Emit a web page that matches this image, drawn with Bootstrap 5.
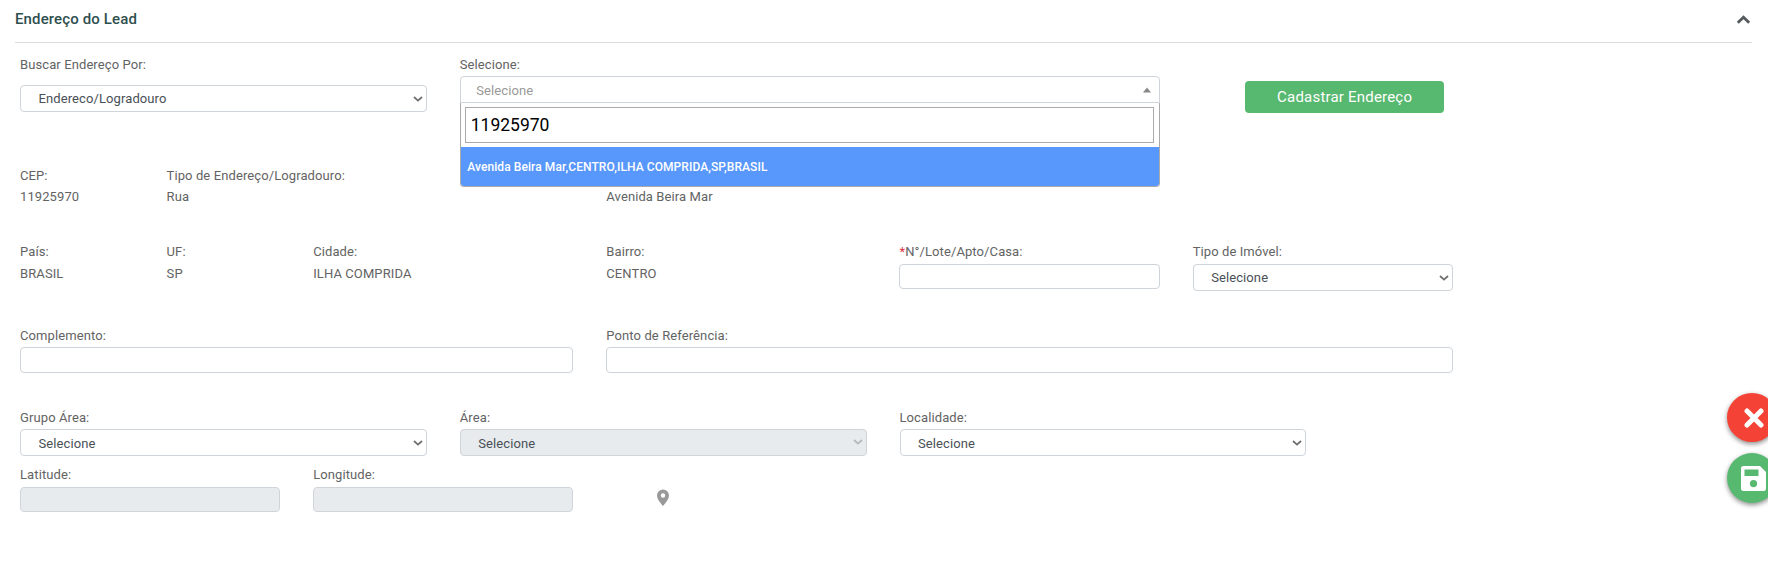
<!DOCTYPE html>
<html lang="pt-BR">
<head>
<meta charset="utf-8">
<meta name="viewport" content="width=device-width, initial-scale=1">
<title>Endereço do Lead</title>
<link rel="stylesheet" href="https://cdn.jsdelivr.net/npm/bootstrap@5.3.0/dist/css/bootstrap.min.css">
<style>
  body { font-family: Roboto, "Liberation Sans", sans-serif; font-size: 13px; line-height: 20px; letter-spacing: .1px; color: #636363; height: 565px; overflow: hidden; background: #fff; }
  .panel-head { height: 43px; margin: 0 16px 12px 15px; padding-bottom: 5px; border-bottom: 1px solid #dcdcdc; }
  .panel-title { font-size: 15px; line-height: 20px; font-weight: 500; letter-spacing: .13px; color: #2f4f4f; }
  .grid { width: 1759px; margin-left: 3.5px; }
  .grid .row { --bs-gutter-x: 33px; margin: 0; }
  .r1 { height: 111px; } .r2 { height: 76px; } .r3 { height: 84px; } .r4 { height: 82px; } .r5 { height: 57px; }
  .grid label { display: block; white-space: nowrap; }
  .grid .form-control, .grid .form-select { font-size: 13px; letter-spacing: inherit; border: 1px solid #ced4da; border-radius: 4px; color: #495057; margin-top: 1px; }
  .grid .form-control { height: 26px; padding: 0 12px; }
  .grid .short { height: 25px; margin-top: 2px; }
  .grid .form-select { height: 27px; padding: 0 28px 0 17.5px; line-height: 25px; background: #fff url("data:image/svg+xml,%3Csvg xmlns='http://www.w3.org/2000/svg' viewBox='0 0 10 6'%3E%3Cpath d='M1 1l4 3.6L9 1' fill='none' stroke='%23707070' stroke-width='1.8'/%3E%3C/svg%3E") no-repeat right 3px center / 10px 6px; }
  .grid .form-select.low { padding-top: 1px; }
  .grid .form-select.by-kind { margin-top: 10px; }
  .grid .form-select.kind { margin-top: 2px; }
  .grid .form-control:disabled, .grid .form-select:disabled { background-color: #e7ebee; opacity: 1; }
  .grid .form-select:disabled { background-image: url("data:image/svg+xml,%3Csvg xmlns='http://www.w3.org/2000/svg' viewBox='0 0 10 6'%3E%3Cpath d='M1 1l4 3.6L9 1' fill='none' stroke='%23b5b8ba' stroke-width='1.7'/%3E%3C/svg%3E"); background-position: right 3px top 9px; }
  .value { margin-top: 1px; }
  .r3 .value { margin-top: 2px; }
  .combo { margin-top: 1px; }
  .combo-box { height: 27px; border: 1px solid #ced4da; border-radius: 4px 4px 0 0; padding: 2px 7px 0 15.5px; color: #999; background: #fff; }
  .combo-box svg { margin-bottom: 2px; }
  .combo-menu { top: 27px; left: 0; right: 0; height: 84px; border: 1px solid #aaa; border-top: 0; border-radius: 0 0 4px 4px; background: #fff; z-index: 5; }
  .combo-menu input { display: block; width: calc(100% - 9px); height: 36px; margin: 4px; padding: 0 5px; border: 1px solid #aaa; font-size: 17.5px; letter-spacing: 0; color: #000; outline: 0; }
  .combo-item { height: 39px; padding: 0 6.5px; background: #5897fb; color: #fff; font-size: 12px; font-weight: 500; letter-spacing: .08px; border-radius: 0 0 3px 3px; }
  .btn-add { width: 199px; height: 32px; margin: 26px 0 0 52px; padding: 0 0 0 1px; border: 0; border-radius: 4px; background: #57b86f; color: #fff; font-size: 15px; letter-spacing: .2px; }
  .fabs { right: -9px; top: 393px; gap: 10px; }
  .fab { width: 50px; height: 50px; border: 0; border-radius: 50%; padding: 0 0 0 3px; box-shadow: 0 2px 5px rgba(0,0,0,.45); }
  .fab-cancel { height: 49px; margin-bottom: 1px; background: #f44336; } .fab-save { background: #57b86f; }
</style>
</head>
<body>
<header class="panel-head d-flex align-items-center justify-content-between">
  <h1 class="panel-title mb-0">Endereço do Lead</h1>
  <svg width="17" height="12" viewBox="0 0 17 12"><path d="M2.800 9.700L8.500 4.200l5.700 5.500" fill="none" stroke="#555a5e" stroke-width="2.800"/></svg>
</header>

<main class="grid">
  <div class="row r1">
    <div class="col-3">
      <label for="by">Buscar Endereço Por:</label>
      <select id="by" class="form-select by-kind"><option>Endereco/Logradouro</option></select>
    </div>
    <div class="col-5">
      <label>Selecione:</label>
      <div class="combo position-relative">
        <div class="combo-box d-flex align-items-center justify-content-between">
          <span>Selecione</span>
          <svg width="10" height="6" viewBox="0 0 10 6"><path d="M1 5.500L5 .5l4 5z" fill="#888"/></svg>
        </div>
        <div class="combo-menu position-absolute">
          <input type="text" value="11925970" aria-label="Pesquisar">
          <div class="combo-item d-flex align-items-center">Avenida Beira Mar,CENTRO,ILHA COMPRIDA,SP,BRASIL</div>
        </div>
      </div>
    </div>
    <div class="col-3"><button type="button" class="btn btn-add">Cadastrar Endereço</button></div>
  </div>

  <div class="row r2">
    <div class="col-1"><label>CEP:</label><div class="value">11925970</div></div>
    <div class="col-3"><label>Tipo de Endereço/Logradouro:</label><div class="value">Rua</div></div>
    <div class="col-4"><label>&nbsp;</label><div class="value">Avenida Beira Mar</div></div>
  </div>

  <div class="row r3">
    <div class="col-1"><label>País:</label><div class="value">BRASIL</div></div>
    <div class="col-1"><label>UF:</label><div class="value">SP</div></div>
    <div class="col-2"><label>Cidade:</label><div class="value">ILHA COMPRIDA</div></div>
    <div class="col-2"><label>Bairro:</label><div class="value">CENTRO</div></div>
    <div class="col-2"><label for="num"><span class="text-danger">*</span>N°/Lote/Apto/Casa:</label><input id="num" class="form-control short"></div>
    <div class="col-2"><label for="kind">Tipo de Imóvel:</label><select id="kind" class="form-select kind"><option>Selecione</option></select></div>
  </div>

  <div class="row r4">
    <div class="col-4"><label for="comp">Complemento:</label><input id="comp" class="form-control"></div>
    <div class="col-6"><label for="ref">Ponto de Referência:</label><input id="ref" class="form-control"></div>
  </div>

  <div class="row r5">
    <div class="col-3"><label for="ga">Grupo Área:</label><select id="ga" class="form-select low"><option>Selecione</option></select></div>
    <div class="col-3"><label for="ar">Área:</label><select id="ar" class="form-select low" disabled><option>Selecione</option></select></div>
    <div class="col-3"><label for="lo">Localidade:</label><select id="lo" class="form-select low"><option>Selecione</option></select></div>
  </div>

  <div class="row">
    <div class="col-2"><label for="lat">Latitude:</label><input id="lat" class="form-control short" disabled></div>
    <div class="col-2"><label for="lon">Longitude:</label><input id="lon" class="form-control short" disabled></div>
    <div class="col-1 d-flex align-items-end justify-content-center pb-1">
      <svg width="12" height="19" viewBox="0 0 12 19"><path fill="#999" fill-rule="evenodd" d="M6 .5a6 6 0 0 0-6 6c0 4.200 6 10.500 6 10.500s6-6.300 6-10.500a6 6 0 0 0-6-6zm0 3.800a2.200 2.200 0 1 1 0 4.400 2.200 2.200 0 0 1 0-4.400z"/></svg>
    </div>
  </div>
</main>

<div class="fabs position-fixed d-flex flex-column">
  <button type="button" class="fab fab-cancel d-flex align-items-center justify-content-center" aria-label="Cancelar">
    <svg width="20" height="20" viewBox="0 0 20 20"><path d="M3 3l14 14M17 3L3 17" stroke="#fff" stroke-width="5" stroke-linecap="round"/></svg>
  </button>
  <button type="button" class="fab fab-save d-flex align-items-center justify-content-center" aria-label="Salvar">
    <svg width="25" height="25" viewBox="0 0 25 25"><path fill="#fff" fill-rule="evenodd" d="M2.500 0H19l6 6v16.500a2.500 2.500 0 0 1-2.500 2.500h-20A2.500 2.500 0 0 1 0 22.500v-20A2.500 2.500 0 0 1 2.500 0zM3.500 3.500v6.500H17.500V3.500zM12.500 14a3.600 3.600 0 1 0 0 7.200 3.600 3.600 0 0 0 0-7.200z"/></svg>
  </button>
</div>
<script src="https://cdn.jsdelivr.net/npm/bootstrap@5.3.0/dist/js/bootstrap.bundle.min.js"></script>
</body>
</html>
